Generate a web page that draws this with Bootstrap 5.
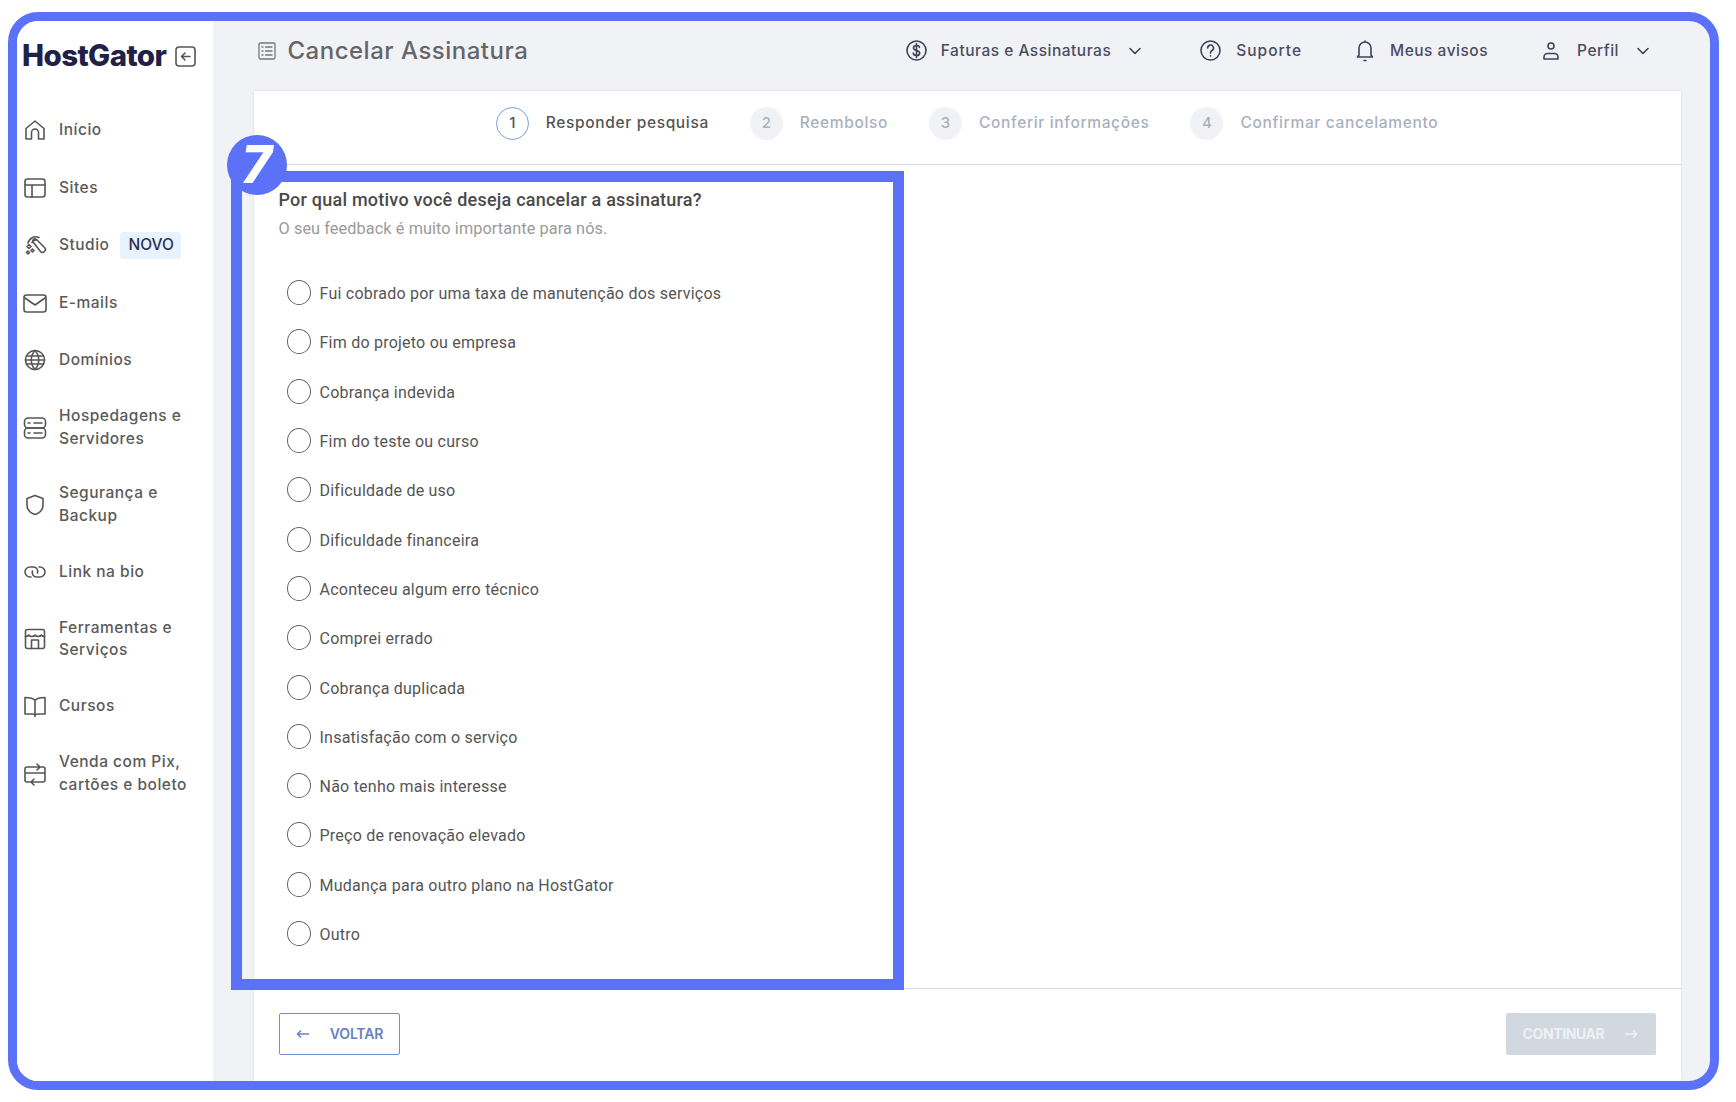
<!doctype html>
<html lang="pt-BR"><head><meta charset="utf-8"><title>Cancelar Assinatura</title>
<link href="https://cdn.jsdelivr.net/npm/bootstrap@5.3.0/dist/css/bootstrap.min.css" rel="stylesheet">
<style>
html,body{height:100%;margin:0;background:#fff;overflow:hidden}
.hg-frame{margin:12px 17px 12px 8px;height:1078px;border:9.5px solid #5b72f8;border-radius:30px;overflow:hidden;background:#f1f2f6;font-family:Inter,"Liberation Sans",sans-serif;color:#555;position:relative}
.hg-side{width:195.5px;background:#fff;flex:none}
.hg-logo{height:70px;margin-bottom:10.5px;padding:0 0 0 5px;gap:9px}
.hg-logo b{font:800 29.5px/1 Inter,sans-serif;letter-spacing:-.6px;color:#1f2147}
.hg-item{min-height:57.5px;padding:16px 0 16px 6px;gap:12px;font-size:15.5px;letter-spacing:.5px;line-height:22.5px;font-weight:500;color:#5a5a5a}
.hg-item svg{flex:none}
.hg-ico{width:24px;height:24px;fill:none;stroke:#555;stroke-width:1.6;stroke-linecap:round;stroke-linejoin:round}
.hg-new{background:#e8f2fc;color:#2b2f55;border-radius:3px;padding:2px 7px 2px 8px;line-height:22.5px;margin:-2px 0 -2px -1px;font-size:15.5px;letter-spacing:0}
.hg-head{height:69.5px;padding:0 60px 10px 4px}
.hg-title{font-size:24px;color:#666;font-weight:500;letter-spacing:.5px;margin-left:12px}
.hg-nav{font-size:15.5px;letter-spacing:.5px;font-weight:500;color:#4b4c62}
.hg-nav .hg-ico{stroke:#3f405a}
.hg-sup{margin-left:58px;letter-spacing:1px}
.hg-warn{margin-left:54px}
.hg-user{margin-left:54px}
.hg-panel{background:#fff;box-shadow:0 0 2px rgba(0,0,0,.12);margin:0 29.5px 0 41px;position:relative}
.hg-steps{height:74px;padding-bottom:8px;border-bottom:1.5px solid #d5dee8;gap:41px;font-size:15.5px;letter-spacing:.65px;font-weight:500;color:#a9b1bd}
.hg-step{gap:17px}
.hg-num{width:33px;height:33px;border-radius:50%;background:#f1f2f6;font-size:15px;letter-spacing:0;color:#a9b1bd}
.hg-on{color:#555}
.hg-on .hg-num{background:#fff;border:1.5px solid #7b9fd0;color:#555}
.hg-form{padding:23px 0 0 25px;font-family:Roboto,sans-serif}
.hg-q{font-size:18px;font-weight:500;color:#4a4a4a;line-height:24px;letter-spacing:.23px}
.hg-sub{font-size:16.25px;color:#9a9a9a;line-height:24px;margin-top:5px;letter-spacing:.1px}
.hg-opts{margin:29px 0 0 8px}
.hg-opt{height:49.3px;gap:9px;font-size:16px;color:#555;margin:0;padding:0;letter-spacing:.23px}
.hg-opt .form-check-input{width:24px;height:25px;margin:0 0 3px;float:none;border:1.5px solid #666;flex:none}
.hg-foot{height:93px;border-top:1.5px solid #d5dee8;padding:23.5px 25px 0 25.5px;font-family:Inter,sans-serif}
.hg-back,.hg-go{height:42px;border-radius:2px;font-size:14px;font-weight:600;letter-spacing:-.15px;padding:0;gap:0}
.hg-back{width:121px;border:1.5px solid #6f92d6;background:#fff;color:#6482c4;gap:20px}
.hg-go,.hg-go:disabled{width:150px;background:#d1d8df;color:#eef1f4;border:0;opacity:1;gap:20px;letter-spacing:-.4px;font-weight:700}
.hg-mark{position:absolute;left:-22.5px;top:80px;width:673px;height:819px;border:11px solid #5b72f8;pointer-events:none}
.hg-seven{position:absolute;left:-27px;top:44px;width:60px;height:60px;border-radius:50%;background:#5b72f8;color:#fff;font:italic 800 52px/60px Inter,sans-serif;text-align:center}
</style></head><body>
<div class="hg-frame d-flex">
<aside class="hg-side">
 <div class="hg-logo d-flex align-items-center"><b>HostGator</b>
  <svg class="hg-ico" style="width:21px;height:21px" viewBox="0 0 21 21"><rect x="1" y="1" width="19" height="19" rx="3"/><path d="M15 10.500H6.500M10 7l-3.500 3.500L10 14"/></svg></div>
 <div class="hg-item d-flex align-items-center"><svg class="hg-ico" viewBox="0 0 24 24"><path d="M3 21V10.500L12 3l9 7.500V21h-5.500v-6.500a3.500 3.500 0 0 0-7 0V21z"/></svg>Início</div>
 <div class="hg-item d-flex align-items-center"><svg class="hg-ico" viewBox="0 0 24 24"><rect x="2" y="3" width="20" height="18" rx="2.500"/><path d="M2 9h20M9 9v12"/></svg>Sites</div>
 <div class="hg-item d-flex align-items-center"><svg class="hg-ico" viewBox="0 0 24 24"><path d="M5 10a8 8 0 0 1 11-5.500M9 9.500a5 5 0 0 1 5-2.500M10.500 9.500a2.100 2.100 0 0 1 3-3l8 8a2.800 2.800 0 0 1-4 4zM6 11.500l2 2-2 2-2-2zM9.500 16l1.500 1.500-1.500 1.500L8 17.500zM5 18l1.500 1.500L5 21l-1.500-1.500z"/></svg>Studio<span class="hg-new">NOVO</span></div>
 <div class="hg-item d-flex align-items-center"><svg class="hg-ico" viewBox="0 0 24 24"><rect x="1" y="4" width="22" height="17" rx="2.500"/><path d="m2 7 10 7 10-7"/></svg>E-mails</div>
 <div class="hg-item d-flex align-items-center"><svg class="hg-ico" viewBox="0 0 24 24"><circle cx="12" cy="12" r="9.500"/><path d="M2.500 12h19M3.500 8h17M3.500 16h17M12 2.500c-5 5.500-5 13.500 0 19M12 2.500c5 5.500 5 13.500 0 19"/></svg>Domínios</div>
 <div class="hg-item d-flex align-items-center"><svg class="hg-ico" viewBox="0 0 24 24"><rect x="1.500" y="2" width="21" height="10" rx="3.500"/><rect x="1.500" y="12" width="21" height="10" rx="3.500"/><path d="M11 7h8M11 17h8M5 7h2M5 17h2"/></svg><span>Hospedagens e<br>Servidores</span></div>
 <div class="hg-item d-flex align-items-center"><svg class="hg-ico" viewBox="0 0 24 24"><path d="M12 2.500 20 5.500V12c0 5-3.500 8-8 9.500C7.500 20 4 17 4 12V5.500z"/></svg><span>Segurança e<br>Backup</span></div>
 <div class="hg-item d-flex align-items-center"><svg class="hg-ico" viewBox="0 0 24 24"><path d="M8 17H7a5 5 0 0 1 0-10h4a4.500 4.500 0 0 1 3.500 6M16 7h1a5 5 0 0 1 0 10h-4a4.500 4.500 0 0 1-3.500-6"/></svg>Link na bio</div>
 <div class="hg-item d-flex align-items-center"><svg class="hg-ico" viewBox="0 0 24 24"><rect x="2.500" y="2.500" width="19" height="19" rx="2"/><path d="M2.500 9.500c1.500 0 2.500-.5 3.200-1.500.7 1 1.700 1.500 3.100 1.500s2.500-.5 3.200-1.500c.7 1 1.800 1.500 3.200 1.500s2.400-.5 3.100-1.500c.7 1 1.700 1.500 3.200 1.500M8.500 21.500V13h7v8.500"/></svg><span>Ferramentas e<br>Serviços</span></div>
 <div class="hg-item d-flex align-items-center"><svg class="hg-ico" viewBox="0 0 24 24"><path d="M12 6.500C10.500 4.500 8 3.500 2 3.500V20h7c1.500 0 3 .5 3 1.500 0-1 1.500-1.500 3-1.500h7V3.500c-6 0-8.500 1-10 3zM12 6.500v16"/></svg>Cursos</div>
 <div class="hg-item d-flex align-items-center"><svg class="hg-ico" viewBox="0 0 24 24"><path d="M9 5H4a2 2 0 0 0-2 2v11a2 2 0 0 0 2 2h4M14 5h6a2 2 0 0 1 2 2v11a2 2 0 0 1-2 2h-5M2 11h20M8 20h10M14 2l3 3-3 3M11 17l-3 3 3 3M7 5h9"/></svg><span>Venda com Pix,<br>cartões e boleto</span></div>
</aside>
<main class="flex-grow-1 d-flex flex-column" style="min-width:0">
 <header class="d-flex align-items-center hg-head" style="margin-left:41px">
  <svg class="hg-ico" style="width:18px;height:18px;stroke:#777;stroke-width:1.300" viewBox="0 0 18 18"><rect x="1" y="1" width="16" height="16" rx="1.500"/><path d="M4 5h1M4 9h1M4 13h1M7.500 5H14M7.500 9H14M7.500 13H14"/></svg>
  <div class="hg-title">Cancelar Assinatura</div>
  <nav class="hg-nav d-flex align-items-center ms-auto">
   <div class="d-flex align-items-center"><svg class="hg-ico" style="width:21px;height:21px;margin-right:14px" viewBox="0 0 21 21"><circle cx="10.500" cy="10.500" r="9.500"/><path d="M13.500 7.500c0-1.200-1.300-2-3-2s-3 .8-3 2.400c0 3.300 6.200 1.700 6.200 5 0 1.600-1.400 2.600-3.200 2.600s-3.200-1-3.200-2.400M10.500 3.500v14"/></svg>Faturas e Assinaturas<svg class="hg-ico" style="width:14px;height:14px;margin-left:17px" viewBox="0 0 14 14"><path d="m2 4.500 5 5 5-5"/></svg></div>
   <div class="hg-sup d-flex align-items-center"><svg class="hg-ico" style="width:21px;height:21px;margin-right:15px" viewBox="0 0 21 21"><circle cx="10.500" cy="10.500" r="9.500"/><path d="M7.700 8a2.900 2.900 0 1 1 4.300 2.500c-1 .6-1.500 1.200-1.500 2.500M10.500 15.800v.1"/></svg>Suporte</div>
   <div class="hg-warn d-flex align-items-center"><svg class="hg-ico" style="width:18px;height:22px;margin-right:16px" viewBox="0 0 18 22"><path d="M1.500 17h15l-1.500-2V8A6 6 0 0 0 3 8v7zM9 1v1M8 20.500h2"/></svg>Meus avisos</div>
   <div class="hg-user d-flex align-items-center"><svg class="hg-ico" style="width:18px;height:20px;margin-right:17px" viewBox="0 0 18 20"><circle cx="9" cy="5" r="3"/><path d="M2 18v-2a3.500 3.500 0 0 1 3.500-3.500h7A3.500 3.500 0 0 1 16 16v2z"/></svg>Perfil<svg class="hg-ico" style="width:14px;height:14px;margin-left:17px" viewBox="0 0 14 14"><path d="m2 4.500 5 5 5-5"/></svg></div>
  </nav>
 </header>
 <section class="hg-panel flex-grow-1 d-flex flex-column">
  <div class="hg-steps d-flex align-items-center justify-content-center">
   <div class="hg-step hg-on d-flex align-items-center"><span class="hg-num d-flex align-items-center justify-content-center">1</span>Responder pesquisa</div>
   <div class="hg-step d-flex align-items-center"><span class="hg-num d-flex align-items-center justify-content-center">2</span>Reembolso</div>
   <div class="hg-step d-flex align-items-center"><span class="hg-num d-flex align-items-center justify-content-center">3</span>Conferir informações</div>
   <div class="hg-step d-flex align-items-center"><span class="hg-num d-flex align-items-center justify-content-center">4</span>Confirmar cancelamento</div>
  </div>
  <form class="hg-form flex-grow-1">
   <div class="hg-q">Por qual motivo você deseja cancelar a assinatura?</div>
   <div class="hg-sub">O seu feedback é muito importante para nós.</div>
   <div class="hg-opts">
    <label class="form-check hg-opt d-flex align-items-center"><input class="form-check-input" type="radio" name="m">Fui cobrado por uma taxa de manutenção dos serviços</label>
    <label class="form-check hg-opt d-flex align-items-center"><input class="form-check-input" type="radio" name="m">Fim do projeto ou empresa</label>
    <label class="form-check hg-opt d-flex align-items-center"><input class="form-check-input" type="radio" name="m">Cobrança indevida</label>
    <label class="form-check hg-opt d-flex align-items-center"><input class="form-check-input" type="radio" name="m">Fim do teste ou curso</label>
    <label class="form-check hg-opt d-flex align-items-center"><input class="form-check-input" type="radio" name="m">Dificuldade de uso</label>
    <label class="form-check hg-opt d-flex align-items-center"><input class="form-check-input" type="radio" name="m">Dificuldade financeira</label>
    <label class="form-check hg-opt d-flex align-items-center"><input class="form-check-input" type="radio" name="m">Aconteceu algum erro técnico</label>
    <label class="form-check hg-opt d-flex align-items-center"><input class="form-check-input" type="radio" name="m">Comprei errado</label>
    <label class="form-check hg-opt d-flex align-items-center"><input class="form-check-input" type="radio" name="m">Cobrança duplicada</label>
    <label class="form-check hg-opt d-flex align-items-center"><input class="form-check-input" type="radio" name="m">Insatisfação com o serviço</label>
    <label class="form-check hg-opt d-flex align-items-center"><input class="form-check-input" type="radio" name="m">Não tenho mais interesse</label>
    <label class="form-check hg-opt d-flex align-items-center"><input class="form-check-input" type="radio" name="m">Preço de renovação elevado</label>
    <label class="form-check hg-opt d-flex align-items-center"><input class="form-check-input" type="radio" name="m">Mudança para outro plano na HostGator</label>
    <label class="form-check hg-opt d-flex align-items-center"><input class="form-check-input" type="radio" name="m">Outro</label>
   </div>
  </form>
  <div class="hg-foot d-flex justify-content-between align-items-start">
   <button type="button" class="btn hg-back d-flex align-items-center justify-content-center"><svg width="14" height="10" viewBox="0 0 14 10" fill="none" stroke="#6482c4" stroke-width="1.500"><path d="M13 5H1.500M5 1.500 1.500 5 5 8.500"/></svg>VOLTAR</button>
   <button type="button" class="btn hg-go d-flex align-items-center justify-content-center" disabled>CONTINUAR<svg width="14" height="10" viewBox="0 0 14 10" fill="none" stroke="#eef1f4" stroke-width="1.500"><path d="M1 5h11.500M9 1.500 12.500 5 9 8.500"/></svg></button>
  </div>
  <div class="hg-mark"></div>
  <div class="hg-seven">7</div>
 </section>
</main>
</div>
<script src="https://cdn.jsdelivr.net/npm/bootstrap@5.3.0/dist/js/bootstrap.bundle.min.js"></script>
</body></html>
